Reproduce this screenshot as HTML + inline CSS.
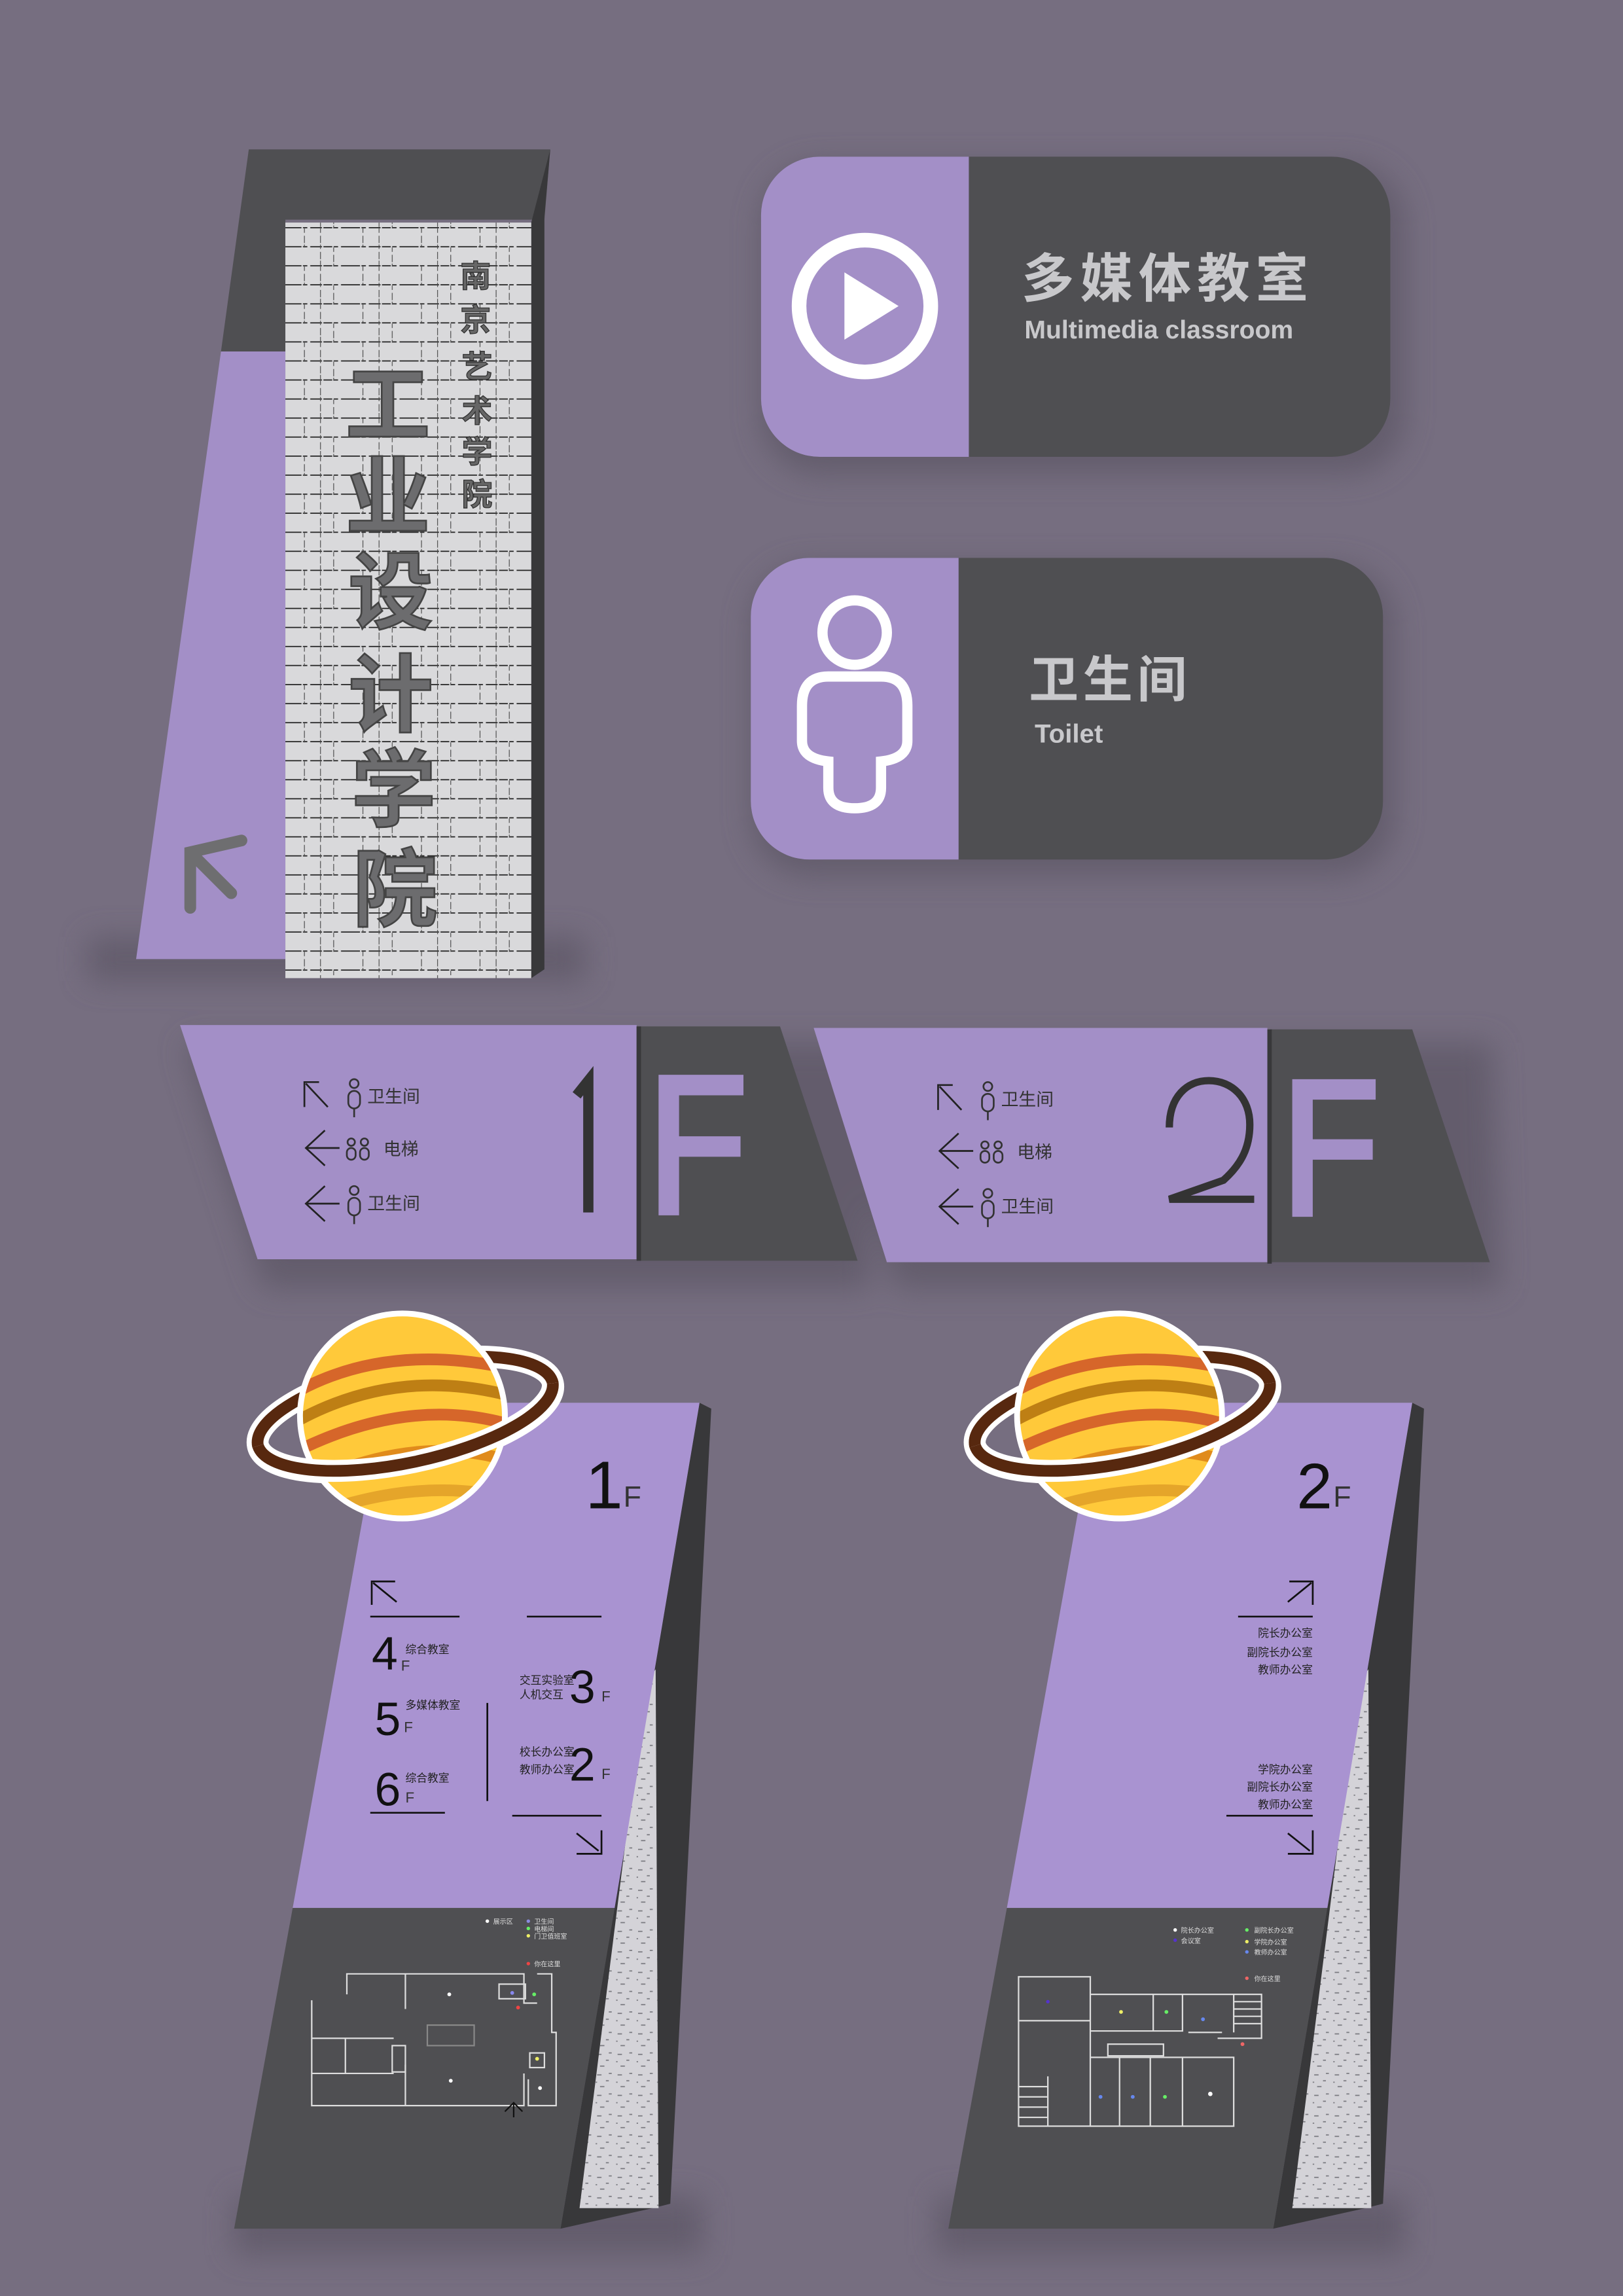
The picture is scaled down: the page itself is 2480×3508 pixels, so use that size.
<!DOCTYPE html>
<html><head><meta charset="utf-8"><style>
html,body{margin:0;padding:0;background:#766e80;}
svg{display:block;}
text{font-family:"Liberation Sans","Noto Sans CJK SC",sans-serif;}
</style></head><body>
<svg width="2480" height="3508" viewBox="0 0 1109 1568" preserveAspectRatio="none" xmlns="http://www.w3.org/2000/svg">
<defs>
<filter id="sh" x="-20%" y="-20%" width="140%" height="140%"><feGaussianBlur stdDeviation="10"/></filter>
<pattern id="brick" width="40" height="26" patternUnits="userSpaceOnUse">
<rect width="40" height="26" fill="#d9d9db"/>
<path d="M0 12.5H40M0 25.5H40" stroke="#222" stroke-width="0.8" stroke-dasharray="6 1 3 2 8 1"/>
<path d="M8 0V13M28 13V26M19 0V26" stroke="#444" stroke-width="0.5" stroke-dasharray="3 2 5 1"/>
</pattern>
<pattern id="speck" width="14" height="14" patternUnits="userSpaceOnUse">
<rect width="14" height="14" fill="#d4d3d8"/>
<path d="M2 3h3M8 7h2M4 11h3M10 2h2M1 8h1" stroke="#7a7a80" stroke-width="0.8"/>
</pattern>
</defs>
<rect width="1109" height="1568" fill="#766e80"/>

<g filter="url(#sh)" fill="#5f5868" opacity="0.8">
<rect x="520" y="112" width="440" height="212" rx="40"/>
<rect x="513" y="386" width="440" height="212" rx="40"/>
<polygon points="126,712 590,712 595,880 180,880"/>
<polygon points="560,712 1020,712 1025,880 612,880"/>
<rect x="60" y="640" width="340" height="30"/>
<rect x="160" y="1500" width="320" height="40"/>
<rect x="640" y="1500" width="320" height="40"/>
</g>

<!-- Big vertical sign -->
<polygon points="170,102 376,102 372,150 195,150 195,240 151,240" fill="#4f4f52"/>
<polygon points="151,240 195,240 195,655 93,655" fill="#a38fc7"/>
<polygon points="363,152 376,102 372,148 372,662 363,668" fill="#38383a"/>
<rect x="195" y="152" width="168" height="516" fill="url(#brick)"/>
<g font-weight="bold" fill="#6c6c6e" stroke="#444" stroke-width="1.2" font-size="58" text-anchor="middle">
<text x="265" y="297">工</text><text x="265" y="360">业</text><text x="267" y="425">设</text><text x="267" y="495">计</text><text x="269" y="560">学</text><text x="270" y="628">院</text>
</g>
<g font-weight="bold" fill="#666" stroke="#333" stroke-width="0.6" font-size="21" text-anchor="middle">
<text x="325" y="196">南</text><text x="325" y="226">京</text><text x="326" y="258">艺</text><text x="326" y="288">术</text><text x="326" y="316">学</text><text x="326" y="345">院</text>
</g>
<path d="M130 620 L130 582 L165 574 M132 584 L158 610" stroke="#6e6e70" stroke-width="8" fill="none" stroke-linecap="round"/>

<!-- Multimedia sign -->
<rect x="520" y="107" width="430" height="205" rx="40" fill="#4f4f52"/>
<path d="M662 107 H560 A40 40 0 0 0 520 147 V272 A40 40 0 0 0 560 312 H662 Z" fill="#a38fc7"/>
<circle cx="591" cy="209" r="45" fill="none" stroke="#fff" stroke-width="10"/>
<polygon points="577,186 577,232 614,209" fill="#fff"/>
<text x="698" y="203" font-size="36" font-weight="bold" fill="#c8c8cb" letter-spacing="4">多媒体教室</text>
<text x="700" y="231" font-size="17.5" font-weight="bold" fill="#c8c8cb">Multimedia classroom</text>

<!-- Toilet sign -->
<rect x="513" y="381" width="432" height="206" rx="40" fill="#4f4f52"/>
<path d="M655 381 H553 A40 40 0 0 0 513 421 V547 A40 40 0 0 0 553 587 H655 Z" fill="#a38fc7"/>
<circle cx="584" cy="432" r="22" fill="none" stroke="#fff" stroke-width="7"/>
<path d="M566 462 Q548 462 548 482 L548 506 Q548 518 566 520 L566 538 Q566 552 584 552 Q602 552 602 538 L602 520 Q620 518 620 506 L620 482 Q620 462 602 462 Z" fill="none" stroke="#fff" stroke-width="7"/>
<text x="703" y="476" font-size="34" font-weight="bold" fill="#c8c8cb" letter-spacing="3">卫生间</text>
<text x="707" y="507" font-size="18" font-weight="bold" fill="#c8c8cb">Toilet</text>

<!-- 1F hanging sign -->
<polygon points="123,700 435,700 435,860 176,860" fill="#a38fc7"/>
<polygon points="435,701 533,701 586,861 435,861" fill="#4f4f52"/>
<rect x="435" y="701" width="3" height="160" fill="#38383a"/>
<path d="M394 748 L402 738 L402 828" stroke="#333" stroke-width="7" fill="none"/>
<path d="M457 830 V741 H508 M457 783 H506" stroke="#a38fc7" stroke-width="14" fill="none"/>
<!-- 2F hanging sign -->
<polygon points="556,702 866,702 866,862 606,862" fill="#a38fc7"/>
<polygon points="868,703 965,703 1018,862 866,862" fill="#4f4f52"/>
<rect x="866" y="703" width="3" height="160" fill="#38383a"/>
<path d="M799 770 C799 749 811 738 826 738 C842 738 854 750 854 768 C854 786 846 797 836 806 L799 819 H857" stroke="#333" stroke-width="5" fill="none" stroke-linejoin="miter"/>
<path d="M890 831 V744 H940 M890 785 H938" stroke="#a38fc7" stroke-width="14" fill="none"/>
<g stroke="#222" stroke-width="1.2" fill="none">
<path d="M208 756 V739 H218 M209 740 L224 756"/>
<path d="M222 772 L209 784 L222 796 M210 784 H232"/>
<path d="M222 810 L209 822 L222 834 M210 822 H232"/>
<path d="M641 758 V741 H651 M642 742 L657 758"/>
<path d="M655 774 L642 786 L655 798 M643 786 H665"/>
<path d="M655 812 L642 824 L655 836 M643 824 H665"/>
</g>
<g stroke="#333" stroke-width="1.2" fill="none">
<circle cx="242" cy="740" r="3"/><rect x="238" y="745" width="8" height="12" rx="4"/><path d="M242 757 V763"/>
<circle cx="240" cy="780" r="2.5"/><rect x="237" y="784" width="6" height="8" rx="3"/><circle cx="249" cy="780" r="2.5"/><rect x="246" y="784" width="6" height="8" rx="3"/>
<circle cx="242" cy="813" r="3"/><rect x="238" y="818" width="8" height="12" rx="4"/><path d="M242 830 V836"/>
<circle cx="675" cy="742" r="3"/><rect x="671" y="747" width="8" height="12" rx="4"/><path d="M675 759 V765"/>
<circle cx="673" cy="782" r="2.5"/><rect x="670" y="786" width="6" height="8" rx="3"/><circle cx="682" cy="782" r="2.5"/><rect x="679" y="786" width="6" height="8" rx="3"/>
<circle cx="675" cy="815" r="3"/><rect x="671" y="820" width="8" height="12" rx="4"/><path d="M675 832 V838"/>
</g>
<g font-size="12" fill="#333">
<text x="251" y="753">卫生间</text><text x="262" y="789">电梯</text><text x="251" y="826">卫生间</text>
<text x="684" y="755">卫生间</text><text x="695" y="791">电梯</text><text x="684" y="828">卫生间</text>
</g>

<!-- Left totem -->
<polygon points="478,958 486,962 458,1505 446,1508 383,1522" fill="#38383a"/>
<polygon points="441,1150 448,1140 450,1508 396,1508" fill="url(#speck)"/>
<polygon points="262,958 478,958 420,1303 200,1303" fill="#a993d1"/>
<polygon points="200,1303 420,1303 383,1522 160,1522" fill="#4f4f52"/>
<!-- Right totem -->
<polygon points="965,958 973,962 945,1505 933,1508 870,1522" fill="#38383a"/>
<polygon points="928,1150 935,1140 937,1508 883,1508" fill="url(#speck)"/>
<polygon points="750,958 965,958 907,1303 688,1303" fill="#a993d1"/>
<polygon points="688,1303 907,1303 870,1522 648,1522" fill="#4f4f52"/>

<!-- planets -->
<g id="planet">
<ellipse cx="277" cy="966" rx="103" ry="34" transform="rotate(-12 277 966)" fill="none" stroke="#fff" stroke-width="15"/>
<ellipse cx="277" cy="966" rx="103" ry="34" transform="rotate(-12 277 966)" fill="none" stroke="#57280f" stroke-width="8"/>
<circle cx="275" cy="967" r="72" fill="#fff"/>
<clipPath id="pc"><circle cx="275" cy="967" r="68"/></clipPath>
<g clip-path="url(#pc)">
<rect x="200" y="895" width="150" height="150" fill="#ffc93a"/>
<g fill="none" stroke-width="8">
<path d="M195 955 Q260 915 350 935" stroke="#d6662a"/>
<path d="M195 975 Q270 930 355 955" stroke="#be7f14"/>
<path d="M195 995 Q280 950 355 975" stroke="#d6662a"/>
<path d="M200 1018 Q285 975 355 1000" stroke="#e08b1c"/>
<path d="M200 1040 Q285 1005 355 1025" stroke="#e5a52a"/>
</g>
</g>
<path d="M176.3 987.4 A103 34 -12 0 0 377.7 944.6" fill="none" stroke="#fff" stroke-width="15"/>
<path d="M176.3 987.4 A103 34 -12 0 0 377.7 944.6" fill="none" stroke="#57280f" stroke-width="8"/>
</g>
<use href="#planet" x="490" y="0"/>

<!-- left totem text -->
<g fill="#111">
<text x="400" y="1030" font-size="46">1</text><text x="426" y="1029" font-size="20" fill="#333">F</text>
<text x="254" y="1140" font-size="32">4</text><text x="274" y="1141" font-size="10" fill="#333">F</text>
<text x="256" y="1185" font-size="32">5</text><text x="276" y="1183" font-size="10" fill="#333">F</text>
<text x="256" y="1233" font-size="32">6</text><text x="277" y="1231" font-size="10" fill="#333">F</text>
<text x="389" y="1163" font-size="32">3</text><text x="411" y="1162" font-size="10" fill="#333">F</text>
<text x="389" y="1216" font-size="32">2</text><text x="411" y="1215" font-size="10" fill="#333">F</text>
</g>
<g font-size="7.5" fill="#222">
<text x="277" y="1129">综合教室</text><text x="277" y="1167">多媒体教室</text><text x="277" y="1217">综合教室</text>
<text x="355" y="1150">交互实验室</text><text x="355" y="1160">人机交互</text>
<text x="355" y="1199">校长办公室</text><text x="355" y="1211">教师办公室</text>
</g>
<g stroke="#111" stroke-width="1.2" fill="none">
<path d="M254 1096 V1080 H270 M255 1081 L271 1094"/><path d="M253 1104 H314"/>
<path d="M253 1238 H304"/><path d="M333 1163 V1230"/><path d="M360 1104 H411"/>
<path d="M350 1240 H411"/><path d="M411 1250 V1266 H394 M394 1252 L409 1264"/>
</g>
<g font-size="4.5" fill="#ddd">
<circle cx="333" cy="1312" r="1.2" fill="#fff"/><text x="337" y="1314">展示区</text>
<circle cx="361" cy="1312" r="1.2" fill="#8a8ae0"/><text x="365" y="1314">卫生间</text>
<circle cx="361" cy="1317" r="1.2" fill="#6e6"/><text x="365" y="1319">电梯间</text>
<circle cx="361" cy="1322" r="1.2" fill="#ee6"/><text x="365" y="1324">门卫值班室</text>
<circle cx="361" cy="1341" r="1.2" fill="#e44"/><text x="365" y="1343">你在这里</text>
</g>
<g stroke="#ddd" stroke-width="1" fill="none">
<path d="M237 1362 V1348 H277 V1372 M277 1348 H358 V1368 H367 M358 1368 V1348 M367 1348 H377 V1388 H380 V1438 H361 V1420"/>
<path d="M213 1366 V1438 H358 V1416"/><path d="M277 1410 V1438"/><path d="M213 1392 H269 M236 1392 V1416 M213 1416 H269"/>
<rect x="268" y="1397" width="9" height="18"/><rect x="292" y="1383" width="32" height="14" stroke="#888"/>
<rect x="362" y="1402" width="10" height="10"/><rect x="341" y="1355" width="18" height="10"/>
<path d="M345 1442 L351 1436 L357 1442 M351 1436 V1446" stroke="#111"/>
</g>
<circle cx="307" cy="1362" r="1.3" fill="#fff"/><circle cx="308" cy="1421" r="1.3" fill="#fff"/><circle cx="350" cy="1361" r="1.3" fill="#88e"/><circle cx="365" cy="1362" r="1.3" fill="#6e6"/><circle cx="354" cy="1371" r="1.3" fill="#e44"/><circle cx="367" cy="1406" r="1.3" fill="#ee6"/><circle cx="369" cy="1426" r="1.3" fill="#fff"/>

<!-- right totem text -->
<text x="886" y="1030" font-size="44" fill="#111">2</text><text x="911" y="1029" font-size="20" fill="#333">F</text>
<g stroke="#111" stroke-width="1.2" fill="none">
<path d="M881 1080 H897 V1096 M896 1081 L880 1094"/><path d="M846 1104 H897"/>
<path d="M838 1240 H897"/><path d="M897 1250 V1266 H880 M880 1252 L895 1264"/>
</g>
<g font-size="7.5" fill="#222" text-anchor="end">
<text x="897" y="1118">院长办公室</text><text x="897" y="1131">副院长办公室</text><text x="897" y="1143">教师办公室</text>
<text x="897" y="1211">学院办公室</text><text x="897" y="1223">副院长办公室</text><text x="897" y="1235">教师办公室</text>
</g>
<g font-size="4.5" fill="#ddd">
<circle cx="803" cy="1318" r="1.2" fill="#fff"/><text x="807" y="1320">院长办公室</text>
<circle cx="803" cy="1325" r="1.2" fill="#53c"/><text x="807" y="1327">会议室</text>
<circle cx="852" cy="1318" r="1.2" fill="#6e6"/><text x="857" y="1320">副院长办公室</text>
<circle cx="852" cy="1326" r="1.2" fill="#ee6"/><text x="857" y="1328">学院办公室</text>
<circle cx="852" cy="1333" r="1.2" fill="#68e"/><text x="857" y="1335">教师办公室</text>
<circle cx="852" cy="1351" r="1.2" fill="#e66"/><text x="857" y="1353">你在这里</text>
</g>
<g stroke="#ddd" stroke-width="1" fill="none">
<rect x="696" y="1350" width="49" height="102"/><path d="M696 1380 H745"/>
<path d="M745 1362 H862 V1392 H832 M808 1362 V1387 H745 M788 1362 V1387"/>
<path d="M745 1405 H808 V1452 M765 1405 V1452 M786 1405 V1452 M808 1405 H843 V1452 H745"/>
<rect x="757" y="1396" width="38" height="8"/><path d="M812 1388 H835 M843 1362 V1388"/>
<path d="M696 1425 H716 M696 1432 H716 M696 1439 H716 M696 1446 H716 M716 1418 V1452"/>
<path d="M843 1367 H862 M843 1372 H862 M843 1377 H862 M843 1382 H862"/>
</g>
<circle cx="716" cy="1367" r="1.2" fill="#53c"/><circle cx="766" cy="1374" r="1.3" fill="#ee6"/><circle cx="797" cy="1374" r="1.3" fill="#6e6"/><circle cx="822" cy="1379" r="1.3" fill="#68e"/><circle cx="849" cy="1396" r="1.3" fill="#e66"/><circle cx="752" cy="1432" r="1.3" fill="#68e"/><circle cx="774" cy="1432" r="1.3" fill="#68e"/><circle cx="796" cy="1432" r="1.3" fill="#6e6"/><circle cx="827" cy="1430" r="1.5" fill="#fff"/>
</svg>
</body></html>
